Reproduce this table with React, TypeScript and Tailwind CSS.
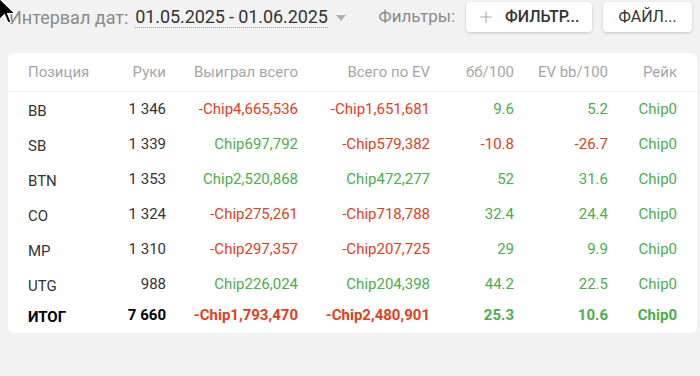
import { Plus } from "lucide-react";

type Row = {
  pos: string;
  hands: string;
  won: string;
  ev: string;
  bb: string;
  evbb: string;
  rake: string;
};

const rows: Row[] = [
  { pos: "BB", hands: "1 346", won: "-Chip4,665,536", ev: "-Chip1,651,681", bb: "9.6", evbb: "5.2", rake: "Chip0" },
  { pos: "SB", hands: "1 339", won: "Chip697,792", ev: "-Chip579,382", bb: "-10.8", evbb: "-26.7", rake: "Chip0" },
  { pos: "BTN", hands: "1 353", won: "Chip2,520,868", ev: "Chip472,277", bb: "52", evbb: "31.6", rake: "Chip0" },
  { pos: "CO", hands: "1 324", won: "-Chip275,261", ev: "-Chip718,788", bb: "32.4", evbb: "24.4", rake: "Chip0" },
  { pos: "MP", hands: "1 310", won: "-Chip297,357", ev: "-Chip207,725", bb: "29", evbb: "9.9", rake: "Chip0" },
  { pos: "UTG", hands: "988", won: "Chip226,024", ev: "Chip204,398", bb: "44.2", evbb: "22.5", rake: "Chip0" },
];

const total: Row = {
  pos: "ИТОГ",
  hands: "7 660",
  won: "-Chip1,793,470",
  ev: "-Chip2,480,901",
  bb: "25.3",
  evbb: "10.6",
  rake: "Chip0",
};

// red for negatives, green otherwise
function tone(v: string) {
  return v.startsWith("-") ? "text-[#e2401c]" : "text-[#4cae4c]";
}

const cols = "grid grid-cols-[1fr_60px_132px_132px_84px_94px_69px] pl-[20px] pr-[20px]";

function Cursor() {
  return (
    <svg className="absolute left-[-3px] top-[-4px] z-10" width="20" height="30" viewBox="0 0 20 30">
      <path d="M2 2 L2 24 L7.5 18.5 L11 27 L14 25.8 L10.6 17.6 L18 17.6 Z" fill="#000" stroke="#fff" strokeWidth="1.2" />
    </svg>
  );
}

function TableRow({ r, bold }: { r: Row; bold?: boolean }) {
  const w = bold ? "font-bold h-[26px]" : "h-[35px]";
  return (
    <div className={`${cols} items-center text-[15px] ${w}`}>
      <div className={`pt-[4px] ${bold ? "text-black" : "text-[#333]"}`}>{r.pos}</div>
      <div className={`text-right ${bold ? "text-black" : "text-[#333]"}`}>{r.hands}</div>
      <div className={`text-right ${tone(r.won)}`}>{r.won}</div>
      <div className={`text-right ${tone(r.ev)}`}>{r.ev}</div>
      <div className={`text-right ${tone(r.bb)}`}>{r.bb}</div>
      <div className={`text-right ${tone(r.evbb)}`}>{r.evbb}</div>
      <div className={`text-right ${tone(r.rake)}`}>{r.rake}</div>
    </div>
  );
}

export default function App() {
  return (
    <div className="relative w-[700px] h-[376px] bg-[#f2f2f2] overflow-hidden font-['Roboto',sans-serif]">
      <Cursor />
      <div className="flex items-center h-[34px] pl-[9px] pr-[8px]">
        <span className="text-[18px] text-[#8a8a8a]">Интервал дат:</span>
        <span className="ml-[7px] text-[18px] text-[#333] border-b border-dotted border-[#999] leading-[20px] tracking-[-0.1px]">
          01.05.2025 - 01.06.2025
        </span>
        <span className="ml-[8px] mt-[1px] w-0 h-0 border-l-[5px] border-r-[5px] border-t-[6px] border-l-transparent border-r-transparent border-t-[#b0b0b0]" />
        <span className="ml-auto text-[17px] text-[#8a8a8a]">Фильтры:</span>
        <button
          type="button"
          className="ml-[11px] flex items-center gap-[10px] w-[126px] h-[30px] pl-[11px] bg-white rounded-[4px] shadow-[0_1px_3px_rgba(0,0,0,0.18)] text-[16px] font-medium text-[#333]"
        >
          <Plus className="h-[18px] w-[18px] text-[#aaa]" strokeWidth={1.4} />
          ФИЛЬТР...
        </button>
        <button
          type="button"
          className="ml-[11px] h-[30px] w-[89px] bg-white rounded-[4px] shadow-[0_1px_3px_rgba(0,0,0,0.18)] text-[16px] text-[#333]"
        >
          ФАЙЛ...
        </button>
      </div>

      <div className="mx-[8px] mt-[19px] w-[689px] bg-white rounded-[6px] pb-[5px]">
        <div className={`${cols} h-[39px] items-center text-[15px] text-[#a6a6a6] border-b border-[#eeeeee]`}>
          <div>Позиция</div>
          <div className="text-right">Руки</div>
          <div className="text-right">Выиграл всего</div>
          <div className="text-right">Всего по EV</div>
          <div className="text-right">бб/100</div>
          <div className="text-right">EV bb/100</div>
          <div className="text-right">Рейк</div>
        </div>
        <div>
          {rows.map((r) => (
            <TableRow key={r.pos} r={r} />
          ))}
          <TableRow r={total} bold />
        </div>
      </div>
    </div>
  );
}
